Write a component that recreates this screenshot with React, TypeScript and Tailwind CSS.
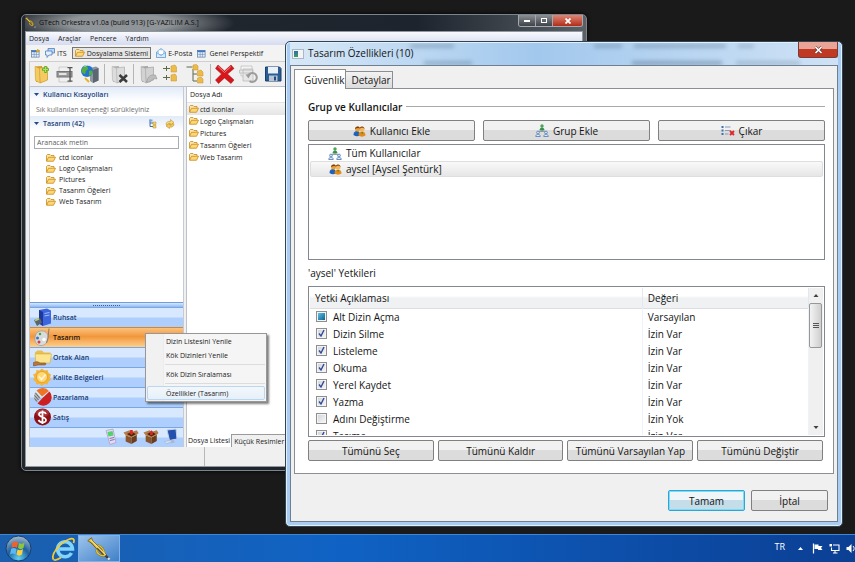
import { useEffect, useRef } from 'react';
import type { ReactNode } from 'react';

/**
 * Orkestra masaüstü: dosyalama penceresi, "Tasarım Özellikleri" iletişim
 * kutusu ve görev çubuğu.
 */

type Durum = 'acik' | 'kapali' | 'karisik';

interface Yetki {
  ad: string;
  deger: string;
  durum: Durum;
}

const YETKILER: Yetki[] = [
  { ad: 'Alt Dizin Açma', deger: 'Varsayılan', durum: 'karisik' },
  { ad: 'Dizin Silme', deger: 'İzin Var', durum: 'acik' },
  { ad: 'Listeleme', deger: 'İzin Var', durum: 'acik' },
  { ad: 'Okuma', deger: 'İzin Var', durum: 'acik' },
  { ad: 'Yerel Kaydet', deger: 'İzin Var', durum: 'acik' },
  { ad: 'Yazma', deger: 'İzin Var', durum: 'acik' },
  { ad: 'Adını Değiştirme', deger: 'İzin Yok', durum: 'kapali' },
  { ad: 'Taşıma', deger: 'İzin Var', durum: 'acik' },
];

const KLASORLER = ['ctd iconlar', 'Logo Çalışmaları', 'Pictures', 'Tasarım Öğeleri', 'Web Tasarım'];

/* ---------- Simgeler ---------- */

function KlasorIkonu() {
  return (
    <svg viewBox="0 0 20 16" className="h-2 w-[10px] shrink-0">
      <path d="M1 14V3l2-2h5l2 2h6v3" fill="#fbe6a8" stroke="#c98a1c" strokeWidth="1.6" />
      <path d="M1 14.5L5 6.5h14l-4 8z" fill="#fdd675" stroke="#c98a1c" strokeWidth="1.6" />
    </svg>
  );
}

function KullanicilarIkonu() {
  return (
    <svg viewBox="0 0 26 24" className="h-3 w-[13px] shrink-0">
      <path d="M1 20c0-6 3-8 7-8s6 3 6 9c-4 2-9 2-13-1z" fill="#1f62b8" />
      <circle cx="9" cy="8" r="5" fill="#e9a03a" />
      <path d="M4 8c0-6 9-7 10-1-3-2-6-1-10 1z" fill="#7a3f10" />
      <path d="M11 21c0-6 3-8 7-8s7 3 7 8c-4 3-10 3-14 0z" fill="#e58a16" />
      <path d="M17 14l1 5 2-5z" fill="#2f8a3a" />
      <circle cx="18" cy="8" r="5" fill="#f3b65a" />
      <path d="M13 8c0-7 10-7 10 0-2-3-6-4-10 0z" fill="#8a4513" />
    </svg>
  );
}

function GrupIkonu() {
  return (
    <svg viewBox="0 0 28 26" className="h-[13px] w-[14px] shrink-0">
      <path d="M14 11v5M6 18v-3h16v3" stroke="#7b8ea8" strokeWidth="1.6" fill="none" />
      <circle cx="14" cy="4" r="3.4" fill="#4aa45a" />
      <path d="M9 13c0-8 10-8 10 0z" fill="#3c8f4b" />
      <g fill="#dbe8f8" stroke="#4f78b5" strokeWidth="1.6">
        <circle cx="6" cy="17" r="2.8" />
        <path d="M1.5 25c0-6 9-6 9 0z" />
        <circle cx="22" cy="17" r="2.8" />
        <path d="M17.5 25c0-6 9-6 9 0z" />
      </g>
    </svg>
  );
}

function CikarIkonu() {
  return (
    <svg viewBox="0 0 28 22" className="h-[11px] w-[14px] shrink-0">
      <path d="M1 2h4v4H1zM1 9h4v4H1zM1 16h4v4H1z" fill="#3f6fb0" />
      <path d="M8 4h11M8 11h11M8 18h7" stroke="#8a9bb8" strokeWidth="2" />
      <path d="M18 12l8 8M26 12l-8 8" stroke="#e0262a" strokeWidth="3.6" />
    </svg>
  );
}

function TrompetIkonu({ className }: { className: string }) {
  return (
    <svg viewBox="0 0 32 32" className={className}>
      <path d="M5 5l20 20" stroke="#5f4a0a" strokeWidth="4" />
      <path d="M13 17c-1 5 7 10 11 7M14 11c5 1 9 6 9 11" stroke="#8f721a" strokeWidth="3" fill="none" />
      <path d="M13 17c-1 5 7 10 11 7M14 11c5 1 9 6 9 11" stroke="#ecca48" strokeWidth="1.5" fill="none" />
      <path d="M1 5l5-4 2 5 8 7-3 3-7-8z" fill="#e3bb35" stroke="#6b5208" />
      <path d="M5 4l20 20" stroke="#f8e07a" strokeWidth="1.5" />
      <path d="M25 25l4 4" stroke="#3b3b3b" strokeWidth="3" />
      <path d="M28 28l2 2" stroke="#e5e5e5" strokeWidth="3" />
    </svg>
  );
}

function TabloIkonu({ yildiz = false }: { yildiz?: boolean }) {
  return (
    <svg viewBox="0 0 20 20" className="size-[9px] shrink-0">
      <rect x="1" y="3" width="17" height="15" fill="#e7f0fb" stroke="#54749f" strokeWidth="1.5" />
      <path d="M1 5h17" stroke="#3d75c2" strokeWidth="4" />
      <path d="M7 6v12M12 6v12M1 12h17" stroke="#6f93bf" strokeWidth="1.5" />
      {yildiz && <path d="M15 0v8M11 4h8" stroke="#e8ad1e" strokeWidth="3" />}
    </svg>
  );
}

function BalonIkonu() {
  return (
    <svg viewBox="0 0 20 20" className="size-[10px] shrink-0">
      <path d="M6 1h13v9H6z" fill="#b9d5f6" stroke="#4778b8" strokeWidth="1.5" />
      <path d="M1 6h13v8H8l-4 5v-5H1z" fill="#e2effd" stroke="#4778b8" strokeWidth="1.5" />
    </svg>
  );
}

function ZarfIkonu() {
  return (
    <svg viewBox="0 0 20 20" className="size-[10px] shrink-0">
      <path d="M1 8l9-7 9 7v11H1z" fill="#bcdcf8" stroke="#65a0d8" strokeWidth="1.5" />
      <path d="M5 4h10v9H5z" fill="#fff" stroke="#9dbfe0" />
      <path d="M1 9l9 6 9-6v10H1z" fill="#d5eafc" stroke="#65a0d8" strokeWidth="1.5" />
    </svg>
  );
}

function Cizim({ children }: { children: ReactNode }) {
  return (
    <svg viewBox="0 0 40 40" className="size-5 shrink-0">
      {children}
    </svg>
  );
}

function Klasor3B({ renk, golge }: { renk: string; golge: string }) {
  return (
    <>
      <path d="M6 5l14-1v30L8 36z" fill={golge} />
      <path d="M14 8l17-2v26l-15 6z" fill={renk} stroke={golge} strokeWidth="1.5" />
      <path d="M6 5l9 4 1 29-9-5z" fill={renk} stroke={golge} />
    </>
  );
}

function YeniKlasor() {
  return (
    <Cizim>
      <Klasor3B renk="#f3cb62" golge="#cf9a2b" />
      <path d="M27 4v14M20 11h14" stroke="#5bb528" strokeWidth="5" />
      <path d="M27 6v10M22 11h10" stroke="#a7e26b" strokeWidth="2" />
    </Cizim>
  );
}

function AdDegistir() {
  return (
    <Cizim>
      <path d="M6 6h18l5 5v25H6z" fill="#f0f0f0" stroke="#c0c0c0" strokeWidth="1.5" />
      <rect x="2" y="15" width="30" height="11" fill="#999" stroke="#777" strokeWidth="2" />
      <path d="M6 20h15" stroke="#e4e4e4" strokeWidth="4" />
      <path d="M23 7h10M28 7v27M23 34h10" stroke="#555" strokeWidth="2.5" />
    </Cizim>
  );
}

function SunucuDunya() {
  return (
    <Cizim>
      <path d="M20 8l12-3 5 3v25l-11 5-6-4z" fill="#8d98a3" />
      <path d="M26 12l11-4v25l-11 5z" fill="#5c6771" />
      <circle cx="14" cy="14" r="12" fill="#2474cf" />
      <path d="M5 8c6-6 10-4 11 0s-6 4-5 9-5 3-8-2zM18 14c5-3 8 0 7 4s-5 7-7 4z" fill="#53b13b" />
      <path d="M9 5c4-3 9-3 12-1" stroke="#cfe7ff" strokeWidth="2" fill="none" />
      <path d="M10 28l8 8" stroke="#e8b32c" strokeWidth="4" />
    </Cizim>
  );
}

function KlasorSil() {
  return (
    <Cizim>
      <Klasor3B renk="#dcdcdc" golge="#b0b0b0" />
      <path d="M21 22l15 14M36 22L21 36" stroke="#3c3c3c" strokeWidth="5" />
    </Cizim>
  );
}

function KlasorTasi() {
  return (
    <Cizim>
      <Klasor3B renk="#d2d2d2" golge="#a4a4a4" />
      <path d="M17 36c3-12 8-15 18-14l3 8c-8-2-12 2-14 6z" fill="#bdbdbd" stroke="#8d8d8d" />
    </Cizim>
  );
}

function AgacKapali() {
  return (
    <Cizim>
      <path d="M2 9h14M9 4v10M2 27h14M9 22v10" stroke="#5e6b4a" strokeWidth="2" />
      <path d="M18 4l8-2 3 4v10H18zM18 22l8-2 3 4v10H18z" fill="#ecbc49" stroke="#c8902a" />
    </Cizim>
  );
}

function AgacAcik() {
  return (
    <Cizim>
      <path d="M1 6h12M14 10v24h8M14 20h8" stroke="#5e6b4a" strokeWidth="2" fill="none" />
      <path d="M14 2l7-1 3 3v8H14zM23 14l7-2 4 4v8H23zM23 28l7-2 4 4v8H23z" fill="#ecbc49" stroke="#c8902a" />
    </Cizim>
  );
}

function SilIkonu() {
  return (
    <Cizim>
      <path d="M6 2l13 12L32 2l6 7-13 11 13 12-6 7-13-11L7 39l-6-7 12-12L1 9z" fill="#d6161b" stroke="#9d0d10" />
      <path d="M6 5l13 12L32 5" stroke="#f4807d" strokeWidth="2" fill="none" />
    </Cizim>
  );
}

function YenileIkonu() {
  return (
    <Cizim>
      <path d="M4 4h22v20H4z" fill="#f4f4f4" stroke="#bdbdbd" strokeWidth="1.5" />
      <path d="M1 12h26v6H1zM8 10h20v24H8z" fill="#e6e6e6" stroke="#b8b8b8" strokeWidth="1.5" />
      <path d="M18 24a9 9 0 1 1 3 10" fill="none" stroke="#9c9c9c" strokeWidth="4" />
      <path d="M13 21l11-1-5 9z" fill="#9c9c9c" />
    </Cizim>
  );
}

function KaydetIkonu() {
  return (
    <Cizim>
      <path d="M5 6h28l3 3v25H5z" fill="#2d5c93" stroke="#183f6d" strokeWidth="2" />
      <path d="M10 6h20v13H10z" fill="#e8f0f8" />
      <path d="M12 23h17v11H12z" fill="#b8c6d4" />
      <path d="M22 25h4v8h-4z" fill="#234c7c" />
    </Cizim>
  );
}

function RuhsatIkonu() {
  return (
    <Cizim>
      <path d="M12 4l16-3 8 4v26l-16 5-8-5z" fill="#3d66dc" />
      <path d="M12 4l8 4v28l-8-5z" fill="#1f3798" />
      <path d="M23 11l10-2M23 16l10-2" stroke="#9fc0ff" strokeWidth="2" />
      <path d="M2 24l12-4 4 9-10 7z" fill="#59646f" />
      <path d="M4 25l8-3" stroke="#c4cf52" strokeWidth="3" />
    </Cizim>
  );
}

function TasarimIkonu() {
  return (
    <Cizim>
      <path d="M18 6c9 0 13 7 12 15S24 35 16 35 3 29 4 20 9 6 18 6z" fill="#d9dadc" stroke="#9b9ea2" strokeWidth="1.5" />
      <circle cx="9" cy="20" r="3" fill="#3a76c8" />
      <circle cx="14" cy="12" r="2.5" fill="#3da84a" />
      <circle cx="12" cy="28" r="3" fill="#d33b30" />
      <circle cx="22" cy="23" r="3.5" fill="#fff" />
      <path d="M32 1l-2 19-3 10" stroke="#8a7a66" strokeWidth="2" fill="none" />
    </Cizim>
  );
}

function OrtakAlanIkonu() {
  return (
    <Cizim>
      <path d="M4 28V9l5-4h9l4 4h13v19z" fill="#e9bf4f" />
      <path d="M4 12h33l-3 18H6z" fill="#fbe58f" stroke="#d3a436" />
      <path d="M1 29c7-3 10-1 13 1h10c4 1 2 4-2 4H10l-9 2z" fill="#b8763c" stroke="#704018" />
    </Cizim>
  );
}

function KaliteIkonu() {
  return (
    <Cizim>
      <path d="M18 1l5 4 6-1 2 6 5 3-2 6 2 5-5 3-2 6-6-1-5 4-5-4-6 1-2-6-5-3 3-5-3-6 6-3 1-6 6 1z" fill="#f2b53a" />
      <circle cx="18" cy="18" r="11" fill="#ffd878" stroke="#e09a22" strokeWidth="1.5" />
      <path d="M12 17l5 6 8-10" stroke="#fff6d8" strokeWidth="3" fill="none" />
    </Cizim>
  );
}

function PazarlamaIkonu() {
  return (
    <Cizim>
      <path d="M18 17L7 5a17 17 0 0 1 25 1z" fill="#ee7425" />
      <path d="M20 19L33 7a17 17 0 0 1-24 24z" fill="#cb1f20" />
      <path d="M15 18L5 8c-4 6-4 15 2 21z" fill="#b5b5b5" />
      <path d="M5 10l9 11M3 15l8 9M3 21l5 6" stroke="#4d4d4d" strokeWidth="1.5" />
    </Cizim>
  );
}

function SatisIkonu() {
  return (
    <Cizim>
      <circle cx="19" cy="18" r="17" fill="#8d1016" />
      <ellipse cx="19" cy="10" rx="13" ry="8" fill="#b9474a" opacity="0.6" />
      <path d="M26 12c-2-5-14-5-14 1s14 4 14 11-12 6-15 0M19 5v27" stroke="#fff" strokeWidth="3.5" fill="none" />
    </Cizim>
  );
}

function TelefonIkonu() {
  return (
    <svg viewBox="0 0 32 36" className="h-[18px] w-4">
      <path d="M6 5l14-3 6 27-12 4z" fill="#e5daf3" stroke="#a99cc9" strokeWidth="1.5" />
      <path d="M9 8l10-2 2 9-10 2z" fill="#4fd36a" />
      <path d="M13 21l9-2M14 25l9-2" stroke="#8276a8" strokeWidth="2" />
    </svg>
  );
}

function KutuIkonu({ yukari = false }: { yukari?: boolean }) {
  return (
    <svg viewBox="0 0 36 36" className="h-[18px] w-4">
      <path d="M6 14l13 5v15L6 28z" fill="#8a542b" />
      <path d="M19 19l12-6v14l-12 7z" fill="#6b3d1c" />
      <path d="M6 14L1 8l14-5 4 4 12-4 4 6-4 4-12 6z" fill="#b57c47" />
      <path d="M9 11l10-4 10 4-10 6z" fill="#41230e" />
      <path d={yukari ? 'M19 3l6 6h-3v5h-6V9h-3z' : 'M16 2h6v6h3l-6 6-6-6h3z'} fill="#d42a20" />
    </svg>
  );
}

function MonitorIkonu() {
  return (
    <svg viewBox="0 0 32 36" className="h-[18px] w-4">
      <path d="M8 4l18-2 2 20-15 3z" fill="#2450ae" stroke="#c4d2e8" strokeWidth="2" />
      <path d="M17 24l4-1 3 6-9 2z" fill="#aab9cf" />
      <path d="M3 27l12-2 2 3-11 3z" fill="#dfe8f4" stroke="#92a4c0" />
    </svg>
  );
}

/* ---------- Ortak parçalar ---------- */

function Dugme({ children, vurgulu = false }: { children: ReactNode; vurgulu?: boolean }) {
  return (
    <button
      type="button"
      className={`flex h-[21px] w-full items-center justify-center gap-1 rounded-[2px] border bg-linear-to-b whitespace-nowrap ${
        vurgulu
          ? 'border-[#2fa5d3] from-[#eef6fa] from-50% to-[#c5dde9] to-50% ring-1 ring-[#7bdcf8] ring-inset'
          : 'border-[#808080] from-[#f1f1f1] from-50% to-[#dcdcdc] to-50%'
      }`}
    >
      {children}
    </button>
  );
}

function OnayKutusu({ id, durum }: { id: string; durum: Durum }) {
  const ref = useRef<HTMLInputElement>(null);

  // "indeterminate" yalnızca DOM özelliği olarak verilebiliyor
  useEffect(() => {
    if (ref.current) ref.current.indeterminate = durum === 'karisik';
  }, [durum]);

  return (
    <span className="grid size-[11px] shrink-0 place-items-center">
      <input
        ref={ref}
        id={id}
        type="checkbox"
        defaultChecked={durum === 'acik'}
        className="peer col-start-1 row-start-1 size-[11px] appearance-none border border-[#8e8f8f] bg-linear-to-br from-[#cfd2d6] to-[#f8f8f8] shadow-[inset_0_0_0_1px_#f4f4f4]"
      />
      <svg
        viewBox="0 0 18 18"
        className="pointer-events-none col-start-1 row-start-1 hidden size-[9px] peer-checked:block"
      >
        <path d="M4 9l4 5 6-12" stroke="#33499c" strokeWidth="2.8" fill="none" />
      </svg>
      <span className="pointer-events-none col-start-1 row-start-1 hidden size-[7px] bg-linear-to-br from-[#58c3ea] to-[#12618f] peer-indeterminate:block" />
    </span>
  );
}

/* ---------- Arka pencere ---------- */

const ARACLAR: { ad: string; ikon: ReactNode; ayrac?: boolean }[] = [
  { ad: 'Yeni klasör', ikon: <YeniKlasor /> },
  { ad: 'Ad değiştir', ikon: <AdDegistir /> },
  { ad: 'Sunucu', ikon: <SunucuDunya />, ayrac: true },
  { ad: 'Klasörü sil', ikon: <KlasorSil />, ayrac: true },
  { ad: 'Klasörü taşı', ikon: <KlasorTasi /> },
  { ad: 'Daralt', ikon: <AgacKapali /> },
  { ad: 'Genişlet', ikon: <AgacAcik />, ayrac: true },
  { ad: 'Sil', ikon: <SilIkonu /> },
  { ad: 'Yenile', ikon: <YenileIkonu /> },
  { ad: 'Kaydet', ikon: <KaydetIkonu /> },
];

const BOLUMLER = [
  { ad: 'Ruhsat', ikon: <RuhsatIkonu /> },
  { ad: 'Tasarım', ikon: <TasarimIkonu />, secili: true },
  { ad: 'Ortak Alan', ikon: <OrtakAlanIkonu /> },
  { ad: 'Kalite Belgeleri', ikon: <KaliteIkonu /> },
  { ad: 'Pazarlama', ikon: <PazarlamaIkonu /> },
  { ad: 'Satış', ikon: <SatisIkonu /> },
];

function BolumBasligi({ children, araclar }: { children: ReactNode; araclar?: ReactNode }) {
  return (
    <h2 className="flex h-[15px] items-center gap-1 bg-linear-to-b from-[#e2ebf8] to-white px-1 font-semibold text-[#1b4078]">
      <svg viewBox="0 0 10 6" className="h-[3px] w-[5px]">
        <path d="M0 0h10L5 6z" fill="#25497f" />
      </svg>
      <span className="grow">{children}</span>
      {araclar}
    </h2>
  );
}

function SolPanel() {
  return (
    <aside className="flex w-[154px] shrink-0 flex-col border-r border-[#c5cbd5] bg-white">
      <BolumBasligi>Kullanıcı Kısayolları</BolumBasligi>
      <p className="h-[14px] px-[6px] leading-4 whitespace-nowrap text-[#6d6d6d]">
        Sık kullanılan seçeneği sürükleyiniz
      </p>
      <BolumBasligi
        araclar={
          <span className="flex gap-2 pr-1">
            <svg viewBox="0 0 16 20" className="h-[10px] w-2">
              <path d="M2 1v14h6M2 8h6" stroke="#3e6ea8" strokeWidth="2" fill="none" />
              <path d="M1 1h6v4H1z" fill="#75a6dc" />
              <path d="M8 6h6v5H8zM8 13h6v5H8z" fill="#f6d566" stroke="#b98b23" />
            </svg>
            <svg viewBox="0 0 20 20" className="size-[10px]">
              <path d="M2 11c0-5 4-7 9-6V1l7 6-7 5V9c-4-1-5 0-6 3z" fill="#f9db77" stroke="#b98117" />
              <path d="M18 10c0 5-4 7-9 6v3l-7-5 7-5v3c4 1 5 0 6-3z" fill="#f4cb56" stroke="#b98117" />
            </svg>
          </span>
        }
      >
        Tasarım (42)
      </BolumBasligi>
      <input
        type="text"
        aria-label="Aranacak metin"
        placeholder="Aranacak metin"
        className="mx-1 mt-[5px] h-[13px] border border-[#a9adb3] bg-white px-[2px] placeholder:text-[#5d5d5d]"
      />
      <ul className="mt-[3px] grow pl-4">
        {KLASORLER.map((k) => (
          <li key={k} className="flex h-[11px] items-center gap-[3px]">
            <KlasorIkonu />
            {k}
          </li>
        ))}
      </ul>
      <nav className="flex flex-col bg-[#bfdcff] font-semibold">
        <span className="flex h-[5px] items-center justify-center border-t border-[#6f9ede] bg-linear-to-b from-[#d6e8ff] to-[#8fb9f2]">
          <span className="w-[27px] border-t border-dotted border-[#3c5f96]" />
        </span>
        {BOLUMLER.map((b) => (
          <button
            key={b.ad}
            type="button"
            className={`flex h-5 items-center border-t pl-[3px] ${
              b.secili
                ? 'border-[#cd8938] bg-linear-to-b from-[#fbc27c] via-[#f2963a] via-45% to-[#fcd08a] text-[#1d1206]'
                : 'border-[#7aa6e4] bg-linear-to-b from-[#d8e9ff] from-45% to-[#aecffd] to-55% text-[#203c74]'
            }`}
          >
            {b.ikon}
            {b.ad}
          </button>
        ))}
        <span className="flex h-5 items-start justify-end gap-1 border-t border-[#7aa6e4] bg-linear-to-b from-[#d8e9ff] from-45% to-[#aecffd] to-55% pr-1">
          <TelefonIkonu />
          <KutuIkonu />
          <KutuIkonu yukari />
          <MonitorIkonu />
        </span>
      </nav>
    </aside>
  );
}

function BaglamMenusu() {
  const satir = 'flex h-[14px] w-full items-center rounded-[2px] text-left whitespace-nowrap';
  return (
    <div className="absolute top-[318px] left-[123px] w-[122px] border border-[#979797] bg-linear-to-r from-[#f1f1f1] from-[17px] via-[#e2e3e3] via-[17px] to-[#f5f5f5] to-[18px] px-px pb-px shadow-[2px_2px_2px_rgba(0,0,0,0.5)]">
      <button type="button" className={`${satir} pl-[19px]`}>
        Dizin Listesini Yenile
      </button>
      <button type="button" className={`${satir} pl-[19px]`}>
        Kök Dizinleri Yenile
      </button>
      <hr className="my-[2px] ml-[18px] border-[#dcdcdc]" />
      <button type="button" className={`${satir} pl-[19px]`}>
        Kök Dizin Sıralaması
      </button>
      <hr className="my-[2px] ml-[18px] border-[#dcdcdc]" />
      <button
        type="button"
        className={`${satir} border border-[#b9d7f2] bg-linear-to-b from-[#f3f7fb] to-[#e6f0f9] pl-[18px]`}
      >
        Özellikler (Tasarım)
      </button>
    </div>
  );
}

function DosyalamaPenceresi() {
  return (
    <section className="absolute top-[14px] right-[268px] left-[21px] rounded-[5px] border border-[#7d848b] bg-linear-to-r from-[#23282e] via-[#1d242d] via-70% to-[#5a6066] px-[3px] pb-[3px] text-[7px] leading-none text-[#1a1a1a] shadow-[0_0_4px_#000]">
      <header className="flex h-4 items-start bg-[radial-gradient(ellipse_115px_20px_at_95px_8px,#8f9498_45%,transparent)]">
        <TrompetIkonu className="mt-[2px] size-[11px]" />
        <h1 className="grow pl-[3px] leading-4 text-[#0c0c0c]">GTech Orkestra v1.0a (build 913) [G-YAZILIM A.S.]</h1>
        <div className="flex h-3 overflow-hidden rounded-b-[3px] border border-t-0 border-[#a5a9ad]">
          <button type="button" aria-label="Simge durumuna küçült" className="flex w-[17px] items-end justify-center border-r border-[#a5a9ad] bg-linear-to-b from-[#8b9095] to-[#3e444a] pb-1">
            <span className="h-[2px] w-[6px] bg-white" />
          </button>
          <button type="button" aria-label="Ekranı kapla" className="flex w-[17px] items-center justify-center border-r border-[#a5a9ad] bg-linear-to-b from-[#8b9095] to-[#3e444a]">
            <span className="h-[5px] w-[6px] border border-white" />
          </button>
          <button type="button" aria-label="Kapat" className="flex w-[29px] items-center justify-center bg-linear-to-b from-[#dd8575] to-[#b02a14]">
            <svg viewBox="0 0 12 12" className="size-[6px]">
              <path d="M1 1l10 10M11 1L1 11" stroke="#fff" strokeWidth="3.5" />
            </svg>
          </button>
        </div>
      </header>

      <div className="border border-[#8f979f] bg-[#f0f0f0]">
        <nav className="flex h-[13px] items-center gap-[9px] bg-linear-to-b from-[#f8f9fe] to-[#d5dcf0] pl-[3px]">
          {['Dosya', 'Araçlar', 'Pencere', 'Yardım'].map((m) => (
            <button key={m} type="button">
              {m}
            </button>
          ))}
        </nav>

        <div className="flex h-4 items-center gap-[5px] bg-[#f3f3f3] pl-[5px] whitespace-nowrap">
          <TabloIkonu yildiz />
          <button type="button" className="flex items-center gap-[2px]">
            <BalonIkonu />
            ITS
          </button>
          <button type="button" className="flex h-3 items-center gap-[2px] border border-[#757575] bg-[#e6e6e6] px-[2px]">
            <KlasorIkonu />
            Dosyalama Sistemi
          </button>
          <button type="button" className="flex items-center gap-[2px]">
            <ZarfIkonu />
            E-Posta
          </button>
          <button type="button" className="flex items-center gap-[3px]">
            <TabloIkonu />
            Genel Perspektif
          </button>
        </div>

        <div className="ml-[3px] flex h-[25px] items-center gap-1 border-t border-l border-[#cfcfcf] pl-[2px]">
          {ARACLAR.map((a) => (
            <span key={a.ad} className={a.ayrac ? 'flex border-r border-[#b5b5b5] pr-1' : 'flex'}>
              <button type="button" aria-label={a.ad}>
                {a.ikon}
              </button>
            </span>
          ))}
        </div>

        <div className="ml-[3px] flex h-[361px] gap-[2px] border-t border-l border-[#bcc2cb]">
          <SolPanel />
          <main className="flex grow flex-col border-l border-[#bcc2cb] bg-white">
            <h2 className="flex h-4 items-center border-b border-[#e3e3e3] pl-[3px]">Dosya Adı</h2>
            <ul className="grow">
              {KLASORLER.map((k, i) => (
                <li
                  key={k}
                  className={`flex h-3 items-center gap-px pl-[2px] ${i === 0 ? 'bg-linear-to-b from-[#f6f6f6] to-[#e5e5e5]' : ''}`}
                >
                  <KlasorIkonu />
                  {k}
                </li>
              ))}
            </ul>
            <div className="flex h-[13px] bg-[#f0f0f0]">
              <button type="button" className="border-r border-[#9a9a9a] bg-white px-px whitespace-nowrap">
                Dosya Listesi
              </button>
              <button type="button" className="border-t border-r border-[#9a9a9a] px-[2px] whitespace-nowrap">
                Küçük Resimler
              </button>
            </div>
          </main>
        </div>

        <footer className="flex h-[19px] pl-[178px]">
          <span className="border-l border-[#b8b8b8]" />
        </footer>
      </div>
      <BaglamMenusu />
    </section>
  );
}

/* ---------- İletişim kutusu ---------- */

function YetkiTablosu() {
  return (
    <div className="flex h-[151px] overflow-hidden border border-[#828790] bg-white p-px">
      <div className="grow overflow-hidden">
        <table className="w-full table-fixed border-collapse text-left">
          <thead>
            <tr className="h-5 bg-linear-to-b from-white from-40% to-[#f0f1f3] to-50% shadow-[0_1px_0_#dcdde0]">
              <th className="w-2/3 border-r border-[#e3e8ee] pl-[5px] font-normal">Yetki Açıklaması</th>
              <th className="border-r border-[#e3e8ee] pl-[5px] font-normal">Değeri</th>
            </tr>
          </thead>
          <tbody>
            {YETKILER.map((y, i) => (
              <tr key={y.ad} className="h-[17px]">
                <td className="border-r border-[#edf3fa] p-0 pl-[6px]">
                  <label htmlFor={`yetki-${i}`} className="flex items-center gap-[6px]">
                    <OnayKutusu id={`yetki-${i}`} durum={y.durum} />
                    {y.ad}
                  </label>
                </td>
                <td className="border-r border-[#edf3fa] p-0 pl-[5px]">{y.deger}</td>
              </tr>
            ))}
          </tbody>
        </table>
      </div>
      <div className="flex w-[14px] shrink-0 flex-col items-center justify-between bg-[#f0f0f0]">
        <div className="flex w-full flex-col items-center">
          <svg viewBox="0 0 10 6" className="my-[6px] h-[3px] w-[6px]">
            <path d="M0 6h10L5 0z" fill="#404040" />
          </svg>
          <div className="flex h-[45px] w-[13px] flex-col items-center justify-center gap-px rounded-[2px] border border-[#979797] bg-linear-to-r from-[#f3f3f3] to-[#cfcfcf]">
            <span className="h-px w-[6px] bg-[#555]" />
            <span className="h-px w-[6px] bg-[#555]" />
            <span className="h-px w-[6px] bg-[#555]" />
          </div>
        </div>
        <svg viewBox="0 0 10 6" className="mb-[6px] h-[3px] w-[6px]">
          <path d="M0 0h10L5 6z" fill="#404040" />
        </svg>
      </div>
    </div>
  );
}

function OzelliklerPenceresi() {
  return (
    <section
      role="dialog"
      aria-label="Tasarım Özellikleri"
      className="absolute top-[41px] right-[12px] left-1/3 rounded-[5px] border border-[#35424f] bg-[#a9cdf2] px-[4px] pb-[4px] text-[10px] leading-none text-[#141414] shadow-[inset_0_0_0_1px_#dff0ff]"
    >
      {/* Cam başlığın ardında kalan pencere içeriği */}
      <div aria-hidden="true" className="pointer-events-none absolute inset-x-1 top-px h-6 overflow-hidden bg-linear-to-r from-[#d7e8f7] via-[#a2c8ed] via-45% to-[#cfe2f5]">
        <span className="absolute top-px left-[120px] h-1 w-11 bg-[#54708c] opacity-40 blur-[2px]" />
        <span className="absolute top-[18px] left-[134px] h-1 w-12 bg-[#54708c] opacity-40 blur-[2px]" />
        <span className="absolute top-px left-[304px] h-1 w-7 bg-[#54708c] opacity-40 blur-[2px]" />
        <span className="absolute top-px left-[344px] h-1 w-[92px] bg-[#54708c] opacity-40 blur-[2px]" />
        <span className="absolute top-px left-[448px] h-1 w-4 bg-[#54708c] opacity-30 blur-[2px]" />
        <span className="absolute top-[18px] left-[342px] h-1 w-[90px] bg-[#54708c] opacity-50 blur-[2px]" />
        <span className="absolute top-[18px] left-[446px] h-1 w-16 bg-[#54708c] opacity-30 blur-[2px]" />
      </div>
      <header className="relative flex h-[23px] items-start pl-[2px]">
        <span className="mt-[7px] flex h-[10px] w-3 gap-px border border-[#a8b8c8] bg-[#f4f4f4] p-px">
          <span className="w-1 bg-linear-to-b from-[#2f6f9e] to-[#3f9a68]" />
        </span>
        <h1 className="grow pl-1 leading-[22px]">Tasarım Özellikleri (10)</h1>
        <button
          type="button"
          aria-label="Kapat"
          className="flex h-4 w-10 items-center justify-center rounded-b-[3px] border border-t-0 border-[#7b3a36] bg-linear-to-b from-[#e8a496] from-45% to-[#bf3923] to-50%"
        >
          <svg viewBox="0 0 18 16" className="h-2 w-[9px]">
            <path d="M3 2l12 12M15 2L3 14" stroke="#5d3a3a" strokeWidth="5.5" />
            <path d="M3 2l12 12M15 2L3 14" stroke="#fff" strokeWidth="3.5" />
          </svg>
        </button>
      </header>

      <div className="relative border border-[#6f7f8f] bg-[#f0f0f0] px-[3px] pt-[3px] pb-[10px]">
        <div role="tablist" className="flex h-[19px] items-end">
          <button
            type="button"
            role="tab"
            aria-selected="true"
            className="relative -mb-px h-[20px] border border-b-0 border-[#8c8e94] bg-white pr-px pl-[9px]"
          >
            Güvenlik
          </button>
          <button
            type="button"
            role="tab"
            aria-selected="false"
            className="h-[17px] border border-b-0 border-l-0 border-[#8c8e94] bg-linear-to-b from-[#f2f2f2] to-[#dcdcdc] pr-px pl-[5px]"
          >
            Detaylar
          </button>
        </div>

        <div className="border border-[#8c8e94] bg-white pr-2 pb-3 pl-[13px]">
          <h2 className="flex h-[31px] items-center gap-1 pt-[4px] font-semibold after:h-px after:grow after:bg-[#a8a8a8]">
            Grup ve Kullanıcılar
          </h2>
          <div className="grid grid-cols-3 gap-2">
            <Dugme>
              <KullanicilarIkonu />
              Kullanıcı Ekle
            </Dugme>
            <Dugme>
              <GrupIkonu />
              Grup Ekle
            </Dugme>
            <Dugme>
              <CikarIkonu />
              Çıkar
            </Dugme>
          </div>

          <ul className="mt-[3px] h-[116px] border border-[#828790] px-px">
            <li className="flex h-4 items-center gap-1 pl-[18px]">
              <GrupIkonu />
              Tüm Kullanıcılar
            </li>
            <li className="flex h-4 items-center gap-1 rounded-[2px] border border-[#dedede] bg-linear-to-b from-[#f9f9f9] to-[#e6e6e6] pl-[18px]">
              <KullanicilarIkonu />
              aysel [Aysel Şentürk]
            </li>
          </ul>

          <h3 className="flex h-[26px] items-center">&apos;aysel&apos; Yetkileri</h3>
          <YetkiTablosu />

          <div className="mt-[3px] grid grid-cols-4 gap-1 pr-[2px]">
            <Dugme>Tümünü Seç</Dugme>
            <Dugme>Tümünü Kaldır</Dugme>
            <Dugme>Tümünü Varsayılan Yap</Dugme>
            <Dugme>Tümünü Değiştir</Dugme>
          </div>
        </div>

        <footer className="mt-4 flex justify-end gap-[6px] pr-[6px]">
          <span className="w-[77px]">
            <Dugme vurgulu>Tamam</Dugme>
          </span>
          <span className="w-[77px]">
            <Dugme>İptal</Dugme>
          </span>
        </footer>
      </div>
    </section>
  );
}

/* ---------- Görev çubuğu ---------- */

function GorevCubugu() {
  return (
    <footer className="flex h-7 shrink-0 items-stretch border-t border-[#3f86d4] bg-linear-to-r from-[#1b5fae] via-[#0f62c4] via-40% to-[#0b3f94] text-[9px] text-white">
      <button type="button" aria-label="Başlat" className="w-10 pl-[5px]">
        <svg viewBox="0 0 54 54" className="size-[27px]">
          <defs>
            <radialGradient id="kure" cx="50%" cy="90%" r="90%">
              <stop offset="0" stopColor="#5fd0f4" />
              <stop offset="0.5" stopColor="#1f5f9e" />
              <stop offset="1" stopColor="#a8bccd" />
            </radialGradient>
          </defs>
          <circle cx="27" cy="27" r="25" fill="url(#kure)" stroke="#173f70" strokeWidth="2" />
          <path d="M15 15c4-3 7-3 11 0l-2 11c-4-3-7-3-11 0z" fill="#f0622a" />
          <path d="M28 16c4 2 7 2 11-1l-2 11c-4 3-7 3-11 0z" fill="#8cc63c" />
          <path d="M12 28c4-3 7-3 11 0l-2 11c-4-3-7-3-11 0z" fill="#5bb8f2" />
          <path d="M25 29c4 2 7 2 11-1l-2 11c-4 3-7 3-11 0z" fill="#fbd13b" />
        </svg>
      </button>
      <button type="button" aria-label="Internet Explorer" className="flex w-[38px] items-center justify-center pl-[10px]">
        <svg viewBox="0 0 48 48" className="size-6">
          <path d="M39 32a15 15 0 1 1 2-8H15" fill="none" stroke="#7fd5fb" strokeWidth="7" />
          <path d="M3 45C-3 35 15 12 33 5c9-4 13-1 10 7" fill="none" stroke="#f7c933" strokeWidth="3.5" />
          <path d="M3 45c3 3 9 0 15-4" fill="none" stroke="#f7c933" strokeWidth="3.5" />
        </svg>
      </button>
      <button
        type="button"
        aria-label="GTech Orkestra"
        className="flex w-[42px] items-center justify-center border border-[#7fb2e6] bg-linear-to-br from-[#9dc4ec] to-[#3f80c8]"
      >
        <TrompetIkonu className="size-6" />
      </button>
      <div className="flex grow items-center justify-end gap-[6px] overflow-hidden">
        <span className="pr-[7px] pb-1">TR</span>
        <svg viewBox="0 0 10 6" className="mr-[3px] h-[3px] w-[5px]">
          <path d="M0 6h10L5 0z" fill="#fff" />
        </svg>
        <svg viewBox="0 0 22 22" className="size-[11px]">
          <path d="M3 1v20" stroke="#fff" strokeWidth="2.5" />
          <path d="M5 3h8v3h8l-3 4 3 4h-9v-2H5z" fill="#fff" />
        </svg>
        <svg viewBox="0 0 22 22" className="size-[11px]">
          <path d="M8 4h12v11H5V9M8 20h9M12 15v5" stroke="#fff" strokeWidth="2.2" fill="none" />
          <path d="M1 2h5v5H1z" fill="#fff" />
        </svg>
        <svg viewBox="0 0 18 22" className="h-[11px] w-[9px]">
          <path d="M1 8h4l6-6v18l-6-6H1z" fill="#fff" />
          <path d="M14 6c3 3 3 7 0 10" stroke="#fff" strokeWidth="2" fill="none" />
        </svg>
      </div>
    </footer>
  );
}

export default function App() {
  return (
    <div className="flex h-screen w-full cursor-default flex-col overflow-hidden bg-[#1a1a1a] font-['Open_Sans','Noto_Sans',sans-serif]">
      <div className="relative grow">
        <DosyalamaPenceresi />
        <OzelliklerPenceresi />
      </div>
      <GorevCubugu />
    </div>
  );
}
